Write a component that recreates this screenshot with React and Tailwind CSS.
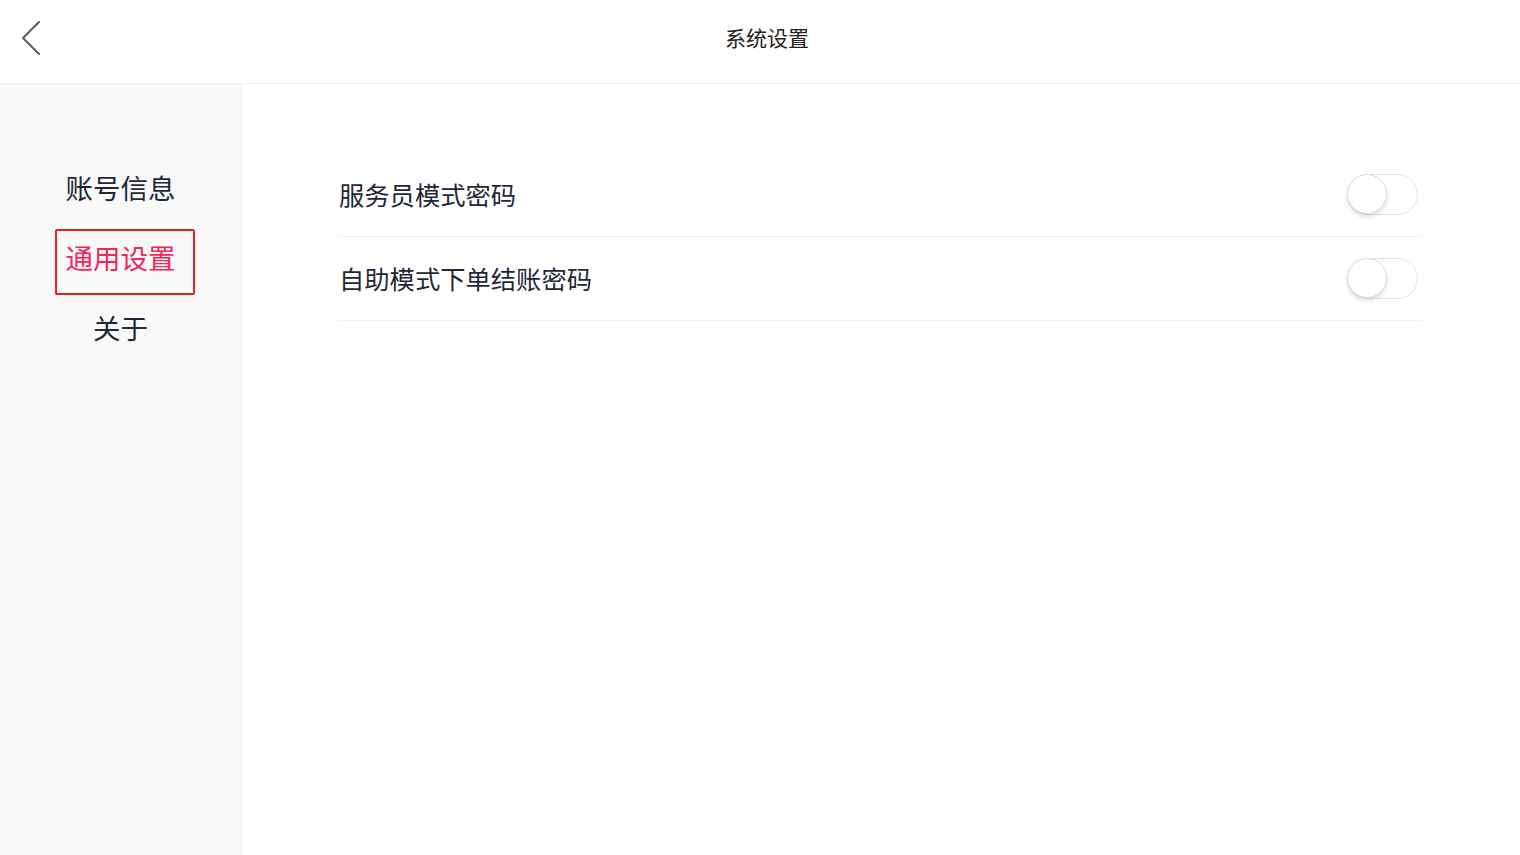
import React, { useState } from 'react';

const font = { fontFamily: '"Noto Sans CJK SC", "Noto Sans", sans-serif' };

function Toggle({ on, onChange }) {
  return (
    <button
      onClick={() => onChange(!on)}
      className={`relative block w-[71px] h-[41px] rounded-full border-[1.5px] transition-colors ${
        on ? 'bg-[#34c759] border-[#34c759]' : 'bg-white border-[#e3e3e3]'
      }`}
    >
      <span
        className={`absolute top-[-1px] w-[40px] h-[40px] rounded-full bg-white border-[1.5px] border-[#dcdcdc] shadow-[0_3px_4px_rgba(0,0,0,0.12)] transition-all ${
          on ? 'left-[30px]' : 'left-[-1px]'
        }`}
      />
    </button>
  );
}

const menu = ['账号信息', '通用设置', '关于'];

export default function App() {
  const [active, setActive] = useState(1);
  const [waiter, setWaiter] = useState(false);
  const [selfPay, setSelfPay] = useState(false);

  const rows = [
    { label: '服务员模式密码', on: waiter, set: setWaiter },
    { label: '自助模式下单结账密码', on: selfPay, set: setSelfPay },
  ];

  return (
    <div className="w-[1520px] h-[855px] flex flex-col bg-white overflow-hidden" style={font}>
      {/* top bar */}
      <div className="h-[84px] shrink-0 flex items-center border-b border-[#f2f2f2]">
        <button className="w-[60px] h-[76px] flex items-center justify-center pl-[2px] pb-[8px]">
          <svg width="22" height="36" viewBox="0 0 22 36" fill="none">
            <path d="M19 2 L3 18 L19 34" stroke="#5a5a5a" strokeWidth="2" strokeLinecap="round" strokeLinejoin="round" />
          </svg>
        </button>
        <div className="flex-1 text-center text-[21px] text-[#222] pr-[46px] pb-[8px]">系统设置</div>
      </div>

      <div className="flex-1 flex">
        {/* sidebar */}
        <div className="w-[242px] shrink-0 bg-[#f9f9f9] border-r border-[#f2f2f2] flex flex-col items-center pt-[75px] gap-[4px]">
          {menu.map((m, i) => (
            <div key={m} className="w-full flex justify-center">
              <button
                onClick={() => setActive(i)}
                className={`h-[66px] flex items-center text-[27.5px] rounded-[2px] pb-[8px] ${
                  active === i
                    ? 'w-[140px] ml-[8px] pl-[9px] text-[#f5245a] border-2 border-[#ee1d1d]'
                    : 'justify-center text-[#1e2836]'
                }`}
              >
                {m}
              </button>
            </div>
          ))}
        </div>

        {/* settings list */}
        <div className="flex-1 pt-[69px] pl-[96px] pr-[98px]">
          {rows.map((r) => (
            <div key={r.label} className="h-[84px] flex items-center justify-between border-b border-[#f2f2f2] pl-[1px]">
              <span className="text-[25.3px] text-[#1e2836]">{r.label}</span>
              <div className="mr-[4px] flex">
                <Toggle on={r.on} onChange={r.set} />
              </div>
            </div>
          ))}
        </div>
      </div>
    </div>
  );
}
